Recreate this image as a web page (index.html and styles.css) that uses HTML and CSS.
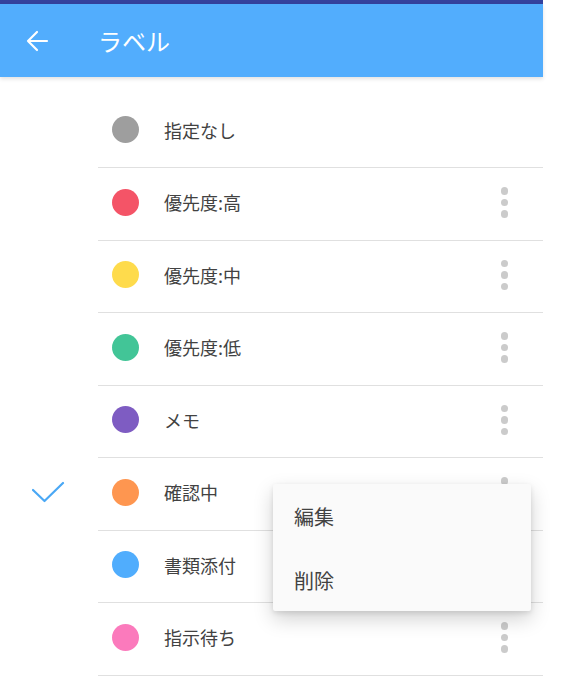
FILE: index.html
```html
<!DOCTYPE html>
<html lang="ja">
<head>
<meta charset="utf-8">
<link rel="stylesheet" href="styles.css">
</head>
<body>
<div class="screen">
  <div class="status"></div>
  <header class="appbar">
    <svg class="back" width="24" height="24" viewBox="0 0 24 24"><path d="M22 12H3M12 3l-9 9 9 9" fill="none" stroke="#fff" stroke-width="2.2" stroke-linecap="round" stroke-linejoin="round"/></svg>
    <h1 class="title">ラベル</h1>
  </header>
  <ul class="list">
    <li class="row"><span class="check"></span><div class="item"><span class="dot gray"></span><span class="label">指定なし</span></div></li>
    <li class="row"><span class="check"></span><div class="item"><span class="dot red"></span><span class="label">優先度:高</span><span class="kebab"><i></i><i></i><i></i></span></div></li>
    <li class="row"><span class="check"></span><div class="item"><span class="dot yellow"></span><span class="label">優先度:中</span><span class="kebab"><i></i><i></i><i></i></span></div></li>
    <li class="row"><span class="check"></span><div class="item"><span class="dot green"></span><span class="label">優先度:低</span><span class="kebab"><i></i><i></i><i></i></span></div></li>
    <li class="row"><span class="check"></span><div class="item"><span class="dot purple"></span><span class="label">メモ</span><span class="kebab"><i></i><i></i><i></i></span></div></li>
    <li class="row"><span class="check"><svg width="34" height="24" viewBox="0 0 34 24"><path d="M1 10l11.5 11L31 3" fill="none" stroke="#4aa8f5" stroke-width="2.2" stroke-linecap="round" stroke-linejoin="round"/></svg></span><div class="item"><span class="dot orange"></span><span class="label">確認中</span><span class="kebab"><i></i><i></i><i></i></span></div></li>
    <li class="row"><span class="check"></span><div class="item"><span class="dot blue"></span><span class="label">書類添付</span><span class="kebab"><i></i><i></i><i></i></span></div></li>
    <li class="row"><span class="check"></span><div class="item"><span class="dot pink"></span><span class="label">指示待ち</span><span class="kebab"><i></i><i></i><i></i></span></div></li>
  </ul>
  <div class="menu">
    <div class="menu-item">編集</div>
    <div class="menu-item">削除</div>
  </div>
</div>
</body>
</html>
```
FILE: styles.css
```css
html, body {
  margin: 0;
  padding: 0;
  background: #fff;
}
body {
  font-family: "Noto Sans CJK JP", "Noto Sans", sans-serif;
  height: 680px;
  overflow: hidden;
}
.screen {
  position: relative;
  width: 543px;
  height: 680px;
  background: #fff;
}
.status {
  height: 4px;
  background: #34419d;
}
.appbar {
  height: 73px;
  background: #52adfd;
  display: flex;
  align-items: center;
  padding-left: 25px;
  box-shadow: 0 2px 4px rgba(0,0,0,0.12);
  position: relative;
  z-index: 1;
}
.back {
  display: block;
}
.title {
  margin: 0 0 0 49px;
  font-size: 24px;
  font-weight: 400;
  color: #fff;
  line-height: 1;
}
.list {
  list-style: none;
  margin: 0;
  padding: 18.5px 0 0;
}
.row {
  display: flex;
  height: 72.5px;
}
.check {
  width: 98px;
  flex: none;
  display: flex;
  align-items: center;
  padding-left: 32px;
  box-sizing: border-box;
}
.check svg {
  display: block;
  margin-top: -4px;
}
.item {
  flex: 1;
  display: flex;
  align-items: center;
  border-bottom: 1.5px solid #e0e0e0;
  padding-left: 14px;
  padding-right: 35px;
}
.dot {
  width: 27px;
  height: 27px;
  border-radius: 50%;
  flex: none;
  margin-top: -3px;
}
.gray { background: #9e9e9e; }
.red { background: #f45467; }
.yellow { background: #fedb4c; }
.green { background: #42c597; }
.purple { background: #7e5cc2; }
.orange { background: #fe9650; }
.blue { background: #50adfd; }
.pink { background: #fb7abc; }
.label {
  margin-left: 25px;
  font-size: 18px;
  color: #424242;
  flex: 1;
  margin-top: -3px;
}
.kebab {
  display: flex;
  flex-direction: column;
  gap: 4px;
  margin-top: -3px;
}
.kebab i {
  display: block;
  width: 7.5px;
  height: 7.5px;
  border-radius: 50%;
  background: #cbcbcb;
}
.menu {
  position: absolute;
  left: 273px;
  top: 484px;
  width: 258px;
  height: 127px;
  background: #fafafa;
  border-radius: 2px;
  box-shadow: 0 8px 20px rgba(0,0,0,0.18), 0 2px 5px rgba(0,0,0,0.1);
  z-index: 2;
}
.menu-item {
  height: 64px;
  display: flex;
  align-items: center;
  padding-left: 21px;
  font-size: 20px;
  color: #424242;
}
```
